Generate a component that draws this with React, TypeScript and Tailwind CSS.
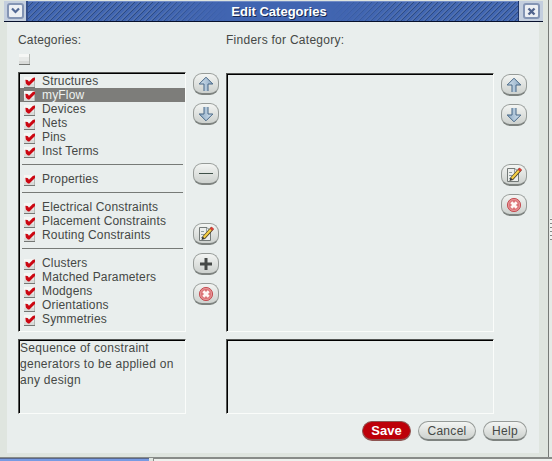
import type { ReactNode } from "react";

const categories: (string | null)[] = [
  "Structures", "myFlow", "Devices", "Nets", "Pins", "Inst Terms", null,
  "Properties", null,
  "Electrical Constraints", "Placement Constraints", "Routing Constraints", null,
  "Clusters", "Matched Parameters", "Modgens", "Orientations", "Symmetries",
];

function Check({ on = true }: { on?: boolean }) {
  return (
    <svg width="11" height="11" viewBox="0 0 11 11" className="block shrink-0" shapeRendering="crispEdges">
      <rect width="11" height="10" fill="#f6f7f5" />
      <rect y="3" width="11" height="4" fill="#e8eae8" />
      <rect y="7" width="11" height="3" fill="#d9dbd9" />
      <path d="M0 10.5H11" stroke="#747774" />
      <path d="M10.5 0V10" stroke="#b4b8b4" />
      {on && <path shapeRendering="auto" d="M1.4 2.8L3.6 3L5 4.8L9 0.8L11 0.8V3L5.4 8.6H4L1.8 6.4Z" fill="#cc0712" />}
    </svg>
  );
}

function Arrow({ down = false }: { down?: boolean }) {
  return (
    <svg width="18" height="18" viewBox="0 0 18 18" className={down ? "rotate-180" : ""}>
      <defs>
        <linearGradient id="steel" x1="0" x2="1">
          <stop offset="0" stopColor="#d4e3ef" />
          <stop offset="1" stopColor="#8da9c3" />
        </linearGradient>
      </defs>
      <path d="M7 16V9H2.2L9 2.2L15.8 9H11V16" fill="url(#steel)" stroke="#466686" />
    </svg>
  );
}

function Edit() {
  return (
    <svg width="18" height="18" viewBox="0 0 18 18">
      <path d="M2.5 2.5H10L13.5 6V15.5H2.5Z" fill="#eceeec" stroke="#747a78" />
      <path d="M9.5 3V6.5H13M4 6.5H7M4 9.5H7M4 12.5H6" stroke="#92a0a0" fill="none" />
      <path d="M6.5 13L15.5 3" stroke="#4b3d24" strokeWidth="3.6" />
      <path d="M6.8 12.6L14 4.6" stroke="#f5d044" strokeWidth="2.2" />
      <path d="M14 4.7L15.8 2.7" stroke="#db3e37" strokeWidth="3" />
      <path d="M4.5 15L5.3 11.8L7.8 14Z" fill="#383834" />
    </svg>
  );
}

function Remove() {
  return (
    <svg width="18" height="18" viewBox="0 0 18 18">
      <circle cx="9" cy="9" r="6.6" fill="#dc7478" stroke="#c55055" />
      <circle cx="9" cy="9" r="5.6" fill="none" stroke="#eaa3a3" strokeWidth="0.7" />
      <path d="M6.3 6.3L11.7 11.7M11.7 6.3L6.3 11.7" stroke="#fff7f5" strokeWidth="2.8" />
    </svg>
  );
}

function Plus() {
  return (
    <svg width="18" height="18" viewBox="0 0 18 18">
      <path d="M9 3V15M3 9H15" stroke="#454947" strokeWidth="3" />
    </svg>
  );
}

function Minus() {
  return (
    <svg width="18" height="18" viewBox="0 0 18 18">
      <path d="M2 8.5H16" stroke="#3f5048" />
    </svg>
  );
}

function Tool({ label, children }: { label: string; children: ReactNode }) {
  return (
    <button aria-label={label} className="flex h-[22px] w-[26px] items-center justify-center rounded-[9px] border border-b-2 border-[#969b98] border-b-[#7e8380] bg-linear-to-b from-[#f3f5f3] to-[#cdd1ce]">
      {children}
    </button>
  );
}

function Panel({ className = "", children }: { className?: string; children?: ReactNode }) {
  return (
    <div className={`border-t border-l border-r border-b border-t-[#555755] border-l-[#555755] border-r-[#fafcfa] border-b-[#fafcfa] ${className}`}>
      <div className="h-full border-t border-l border-black">{children}</div>
    </div>
  );
}

function TitleButton({ label, children }: { label: string; children: ReactNode }) {
  return (
    <button aria-label={label} className="flex h-4 w-[17px] items-center justify-center rounded-[3px] border-2 border-[#8495b4] bg-[#edf0f4]">
      {children}
    </button>
  );
}

export default function App() {
  return (
    <main className="flex h-[461px] w-[552px] flex-col overflow-hidden bg-[#dfe5df] font-['Liberation_Sans',sans-serif] text-[12px] text-[#454845]">
      <div className="flex h-[458px] border-b border-[#888b88]">
        <div className="flex w-[548px] shrink-0 flex-col pt-px pl-1">
          <header className="flex h-[21px] w-[539px] shrink-0 border-b border-[#07102c] bg-[#4165b1]">
            <div className="flex w-[24px] items-start justify-center border-r-2 border-[#354f89] bg-[#c3cede] pt-0.5">
              <TitleButton label="Window menu">
                <svg width="11" height="10" viewBox="0 0 11 10"><path d="M2 2.5L5.5 6L9 2.5" fill="none" stroke="#536995" strokeWidth="2.2" /></svg>
              </TitleButton>
            </div>
            <div className="flex flex-1 border-t border-[#708bc5]">
              <div className="w-[199px] mask-r-from-60% bg-[repeating-linear-gradient(135deg,#4166b1_0px,#4166b1_2px,#6883b7_2.4px,#294987_3.6px,#4166b1_4.24px)]" />
              <h1 className="w-[104px] text-center text-[13px] leading-[19px] font-bold whitespace-nowrap text-white [text-shadow:1px_1px_0_#17284e]">Edit Categories</h1>
              <div className="flex-1 mask-l-from-60% bg-[repeating-linear-gradient(135deg,#4166b1_0px,#4166b1_2px,#6883b7_2.4px,#294987_3.6px,#4166b1_4.24px)]" />
            </div>
            <div className="flex w-[25px] items-start justify-center border-l border-[#20366b] bg-[#c3cede] pt-0.5">
              <TitleButton label="Close">
                <svg width="9" height="9" viewBox="0 0 9 9"><path d="M1.5 1.5L7.5 7.5M7.5 1.5L1.5 7.5" stroke="#52658d" strokeWidth="2.4" /></svg>
              </TitleButton>
            </div>
          </header>

          <section className="ml-[3px] h-[431px] w-[532px] bg-[#e9eeed] pl-[11px]">
            <div className="flex">
              <div className="w-[175px] pt-[10px]">
                <h2 className="h-4 leading-4 tracking-[0.16px]">Categories:</h2>
                <div className="mt-[6px] pl-px"><Check on={false} /></div>
                <Panel className="mt-[7px] h-[260px] w-[168px]">
                  <ul>
                    {categories.map((name, i) =>
                      name ? (
                        <li key={i} className={`flex h-[14px] pr-px pl-1 ${name === "myFlow" ? "bg-[#7d7d7a] text-[#edf2ef]" : ""}`}>
                          <span className="pt-[3px]"><Check /></span>
                          <span className="ml-[7px] leading-[14px] tracking-[0.16px] whitespace-nowrap">{name}</span>
                        </li>
                      ) : (
                        <li key={i} className="h-[14px] pt-[6px] pl-0.5"><hr className="w-[161px] border-[#777a77]" /></li>
                      )
                    )}
                  </ul>
                </Panel>
                <Panel className="mt-[7px] h-[75px] w-[168px]">
                  <p className="-mt-px leading-4 tracking-[0.28px]">Sequence of constraint<br />generators to be applied on<br />any design</p>
                </Panel>
              </div>

              <nav className="flex w-[33px] flex-col gap-2 pt-[51px]">
                <Tool label="Move category up"><Arrow /></Tool>
                <Tool label="Move category down"><Arrow down /></Tool>
                <div className="h-[22px]" />
                <Tool label="Hide category"><Minus /></Tool>
                <div className="h-[22px]" />
                <Tool label="Edit category"><Edit /></Tool>
                <Tool label="Add category"><Plus /></Tool>
                <Tool label="Delete category"><Remove /></Tool>
              </nav>

              <div className="w-[275px] pt-[10px]">
                <h2 className="h-4 leading-4 tracking-[0.27px]">Finders for Category:</h2>
                <Panel className="mt-[25px] h-[259px] w-[268px]" />
                <Panel className="mt-[7px] h-[75px] w-[268px]" />
              </div>

              <nav className="flex flex-col gap-2 pt-[52px]">
                <Tool label="Move finder up"><Arrow /></Tool>
                <Tool label="Move finder down"><Arrow down /></Tool>
                <div className="h-[22px]" />
                <Tool label="Edit finder"><Edit /></Tool>
                <Tool label="Delete finder"><Remove /></Tool>
              </nav>
            </div>

            <footer className="mt-[7px] flex justify-end gap-[7px] pr-3">
              <button className="h-5 w-[49px] rounded-[10px] border border-b-2 border-[#8e5552] bg-[#bd0009] text-[13px] leading-[17px] font-bold text-white">Save</button>
              <button className="h-5 w-[58px] rounded-[10px] border border-b-2 border-[#969b98] border-b-[#7e8380] bg-linear-to-b from-[#f3f5f3] to-[#cdd1ce] pt-px leading-4 tracking-[0.3px]">Cancel</button>
              <button className="h-5 w-[44px] rounded-[10px] border border-b-2 border-[#969b98] border-b-[#7e8380] bg-linear-to-b from-[#f3f5f3] to-[#cdd1ce] pt-px leading-4 tracking-[0.3px]">Help</button>
            </footer>
          </section>
        </div>
        <aside className="flex flex-1 items-center border-l border-[#777a77] bg-[#e6eae6] pl-px">
          <div className="h-[22px] w-[2px] bg-[repeating-linear-gradient(0deg,#858885_0px,#858885_1px,#f2f4f2_1px,#f2f4f2_4px)]" />
        </aside>
      </div>
      <div className="flex h-[3px] gap-1">
        <div className="w-[149px] border-t border-[#59678b] bg-[#789be3]" />
        <div className="flex-1 border-t border-l border-[#888b88] bg-[#eef1ee]" />
      </div>
    </main>
  );
}
